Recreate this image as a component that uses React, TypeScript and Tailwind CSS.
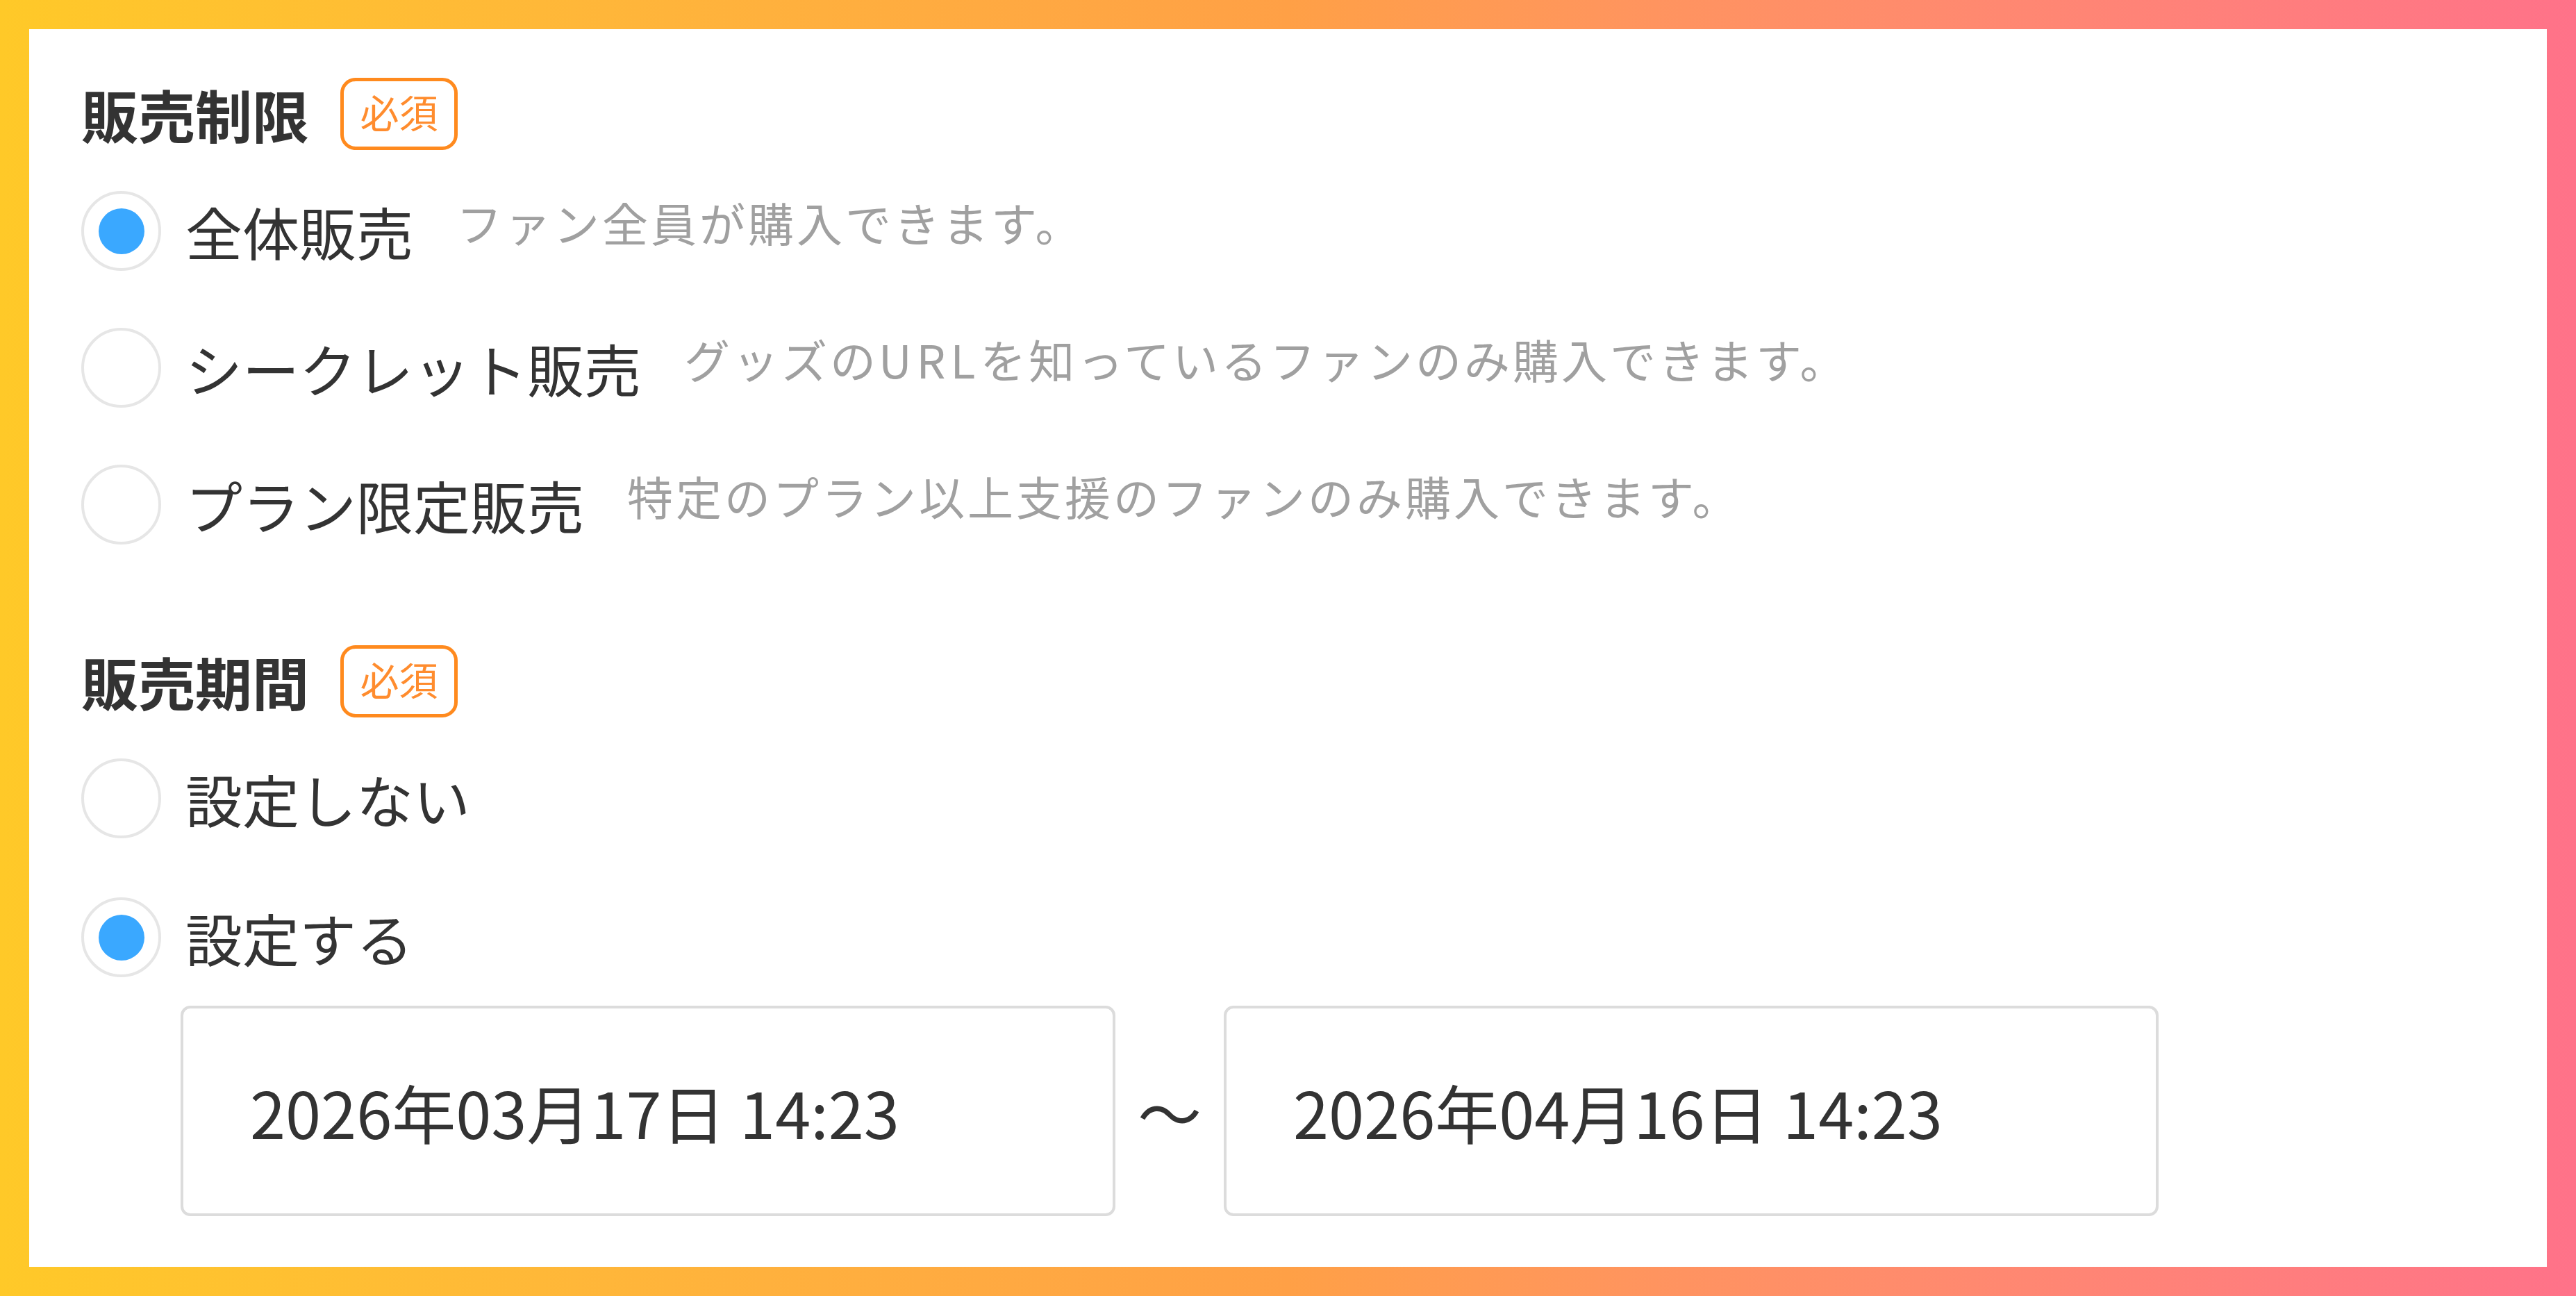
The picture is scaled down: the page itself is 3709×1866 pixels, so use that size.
import React from "react";

const FONT = { fontFamily: '"Noto Sans CJK JP", "Noto Sans", sans-serif' };

type Option = { label: string; desc?: React.ReactNode; checked?: boolean };

const Radio = ({ checked }: { checked?: boolean }) => (
  <div className="w-[115px] h-[115px] shrink-0 rounded-full border-[4px] border-[#e6e6e6] bg-white flex items-center justify-center">
    {checked && <div className="w-[66px] h-[66px] rounded-full bg-[#3aa8ff]" />}
  </div>
);

const Badge = () => (
  <span className="w-[169px] h-[104px] rounded-[22px] border-[5px] border-[#ff8a1e] flex items-center justify-center text-[56px] leading-none text-[#ff8c2e] pb-[8px]">
    必須
  </span>
);

const Heading = ({ title }: { title: string }) => (
  <div className="flex items-center gap-[45px]">
    <h3 className="text-[82px] leading-none font-bold text-[#333]">{title}</h3>
    <Badge />
  </div>
);

const RadioRow = ({ label, desc, checked }: Option) => (
  <div className="flex items-center">
    <Radio checked={checked} />
    <span className="ml-[35px] text-[82px] leading-none text-[#333]">{label}</span>
    {desc && (
      <span className="ml-[62px] mb-[28px] text-[66px] leading-none tracking-[4px] text-[#a0a0a0]">
        {desc}
      </span>
    )}
  </div>
);

const DateBox = ({ value }: { value: string }) => (
  <div className="w-[1346px] h-[303px] rounded-[14px] border-[4px] border-[#dcdcdc] bg-white flex items-center pl-[96px]">
    <span className="text-[92px] leading-none text-[#333]">{value}</span>
  </div>
);

export default function App() {
  const limits: Option[] = [
    { label: "全体販売", desc: "ファン全員が購入できます。", checked: true },
    {
      label: "シークレット販売",
      desc: (
        <>
          グッズの<span className="tracking-[7px]">URL</span>を知っているファンのみ購入できます。
        </>
      ),
    },
    { label: "プラン限定販売", desc: "特定のプラン以上支援のファンのみ購入できます。" },
  ];

  return (
    <div
      className="w-[3709px] h-[1866px] p-[42px] bg-linear-to-r from-[#ffc928] via-[#ffa046] to-[#ff7289]"
      style={FONT}
    >
      <div className="h-full bg-white pt-[70px] pl-[75px]">
        {/* 販売制限 */}
        <Heading title="販売制限" />
        <div className="mt-[59px] flex flex-col gap-[82px]">
          {limits.map((o) => (
            <RadioRow key={o.label} {...o} />
          ))}
        </div>

        {/* 販売期間 */}
        <div className="mt-[145px]">
          <Heading title="販売期間" />
        </div>
        <div className="mt-[59px] flex flex-col gap-[85px]">
          <RadioRow label="設定しない" />
          <RadioRow label="設定する" checked />
        </div>

        <div className="mt-[41px] ml-[143px] flex items-center">
          <DateBox value="2026年03月17日 14:23" />
          <span className="w-[156px] text-center text-[92px] leading-none text-[#333]">〜</span>
          <DateBox value="2026年04月16日 14:23" />
        </div>
      </div>
    </div>
  );
}
